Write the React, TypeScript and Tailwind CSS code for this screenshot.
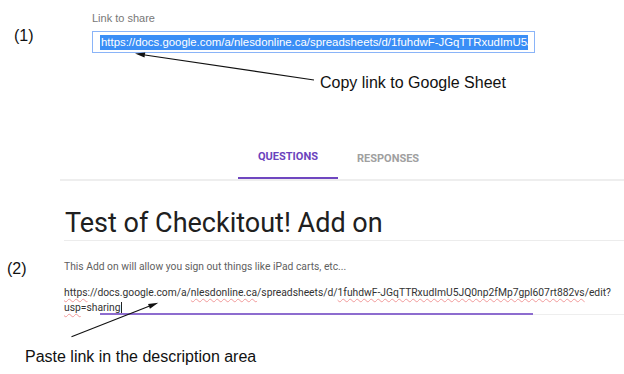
const sans = "font-['Liberation_Sans',Arial,sans-serif]";
const roboto = "font-['Roboto',sans-serif]";

const url1a = "https";
const url1b = "://docs.google.com/a/";
const url1c = "nlesdonline.ca";
const url1d = "/spreadsheets/d/";
const url1e = "1fuhdwF-JGqTTRxudImU5JQ0np2fMp7gpl607rt882vs";
const url1f = "/edit?";

const Arrow = ({ x1, y1, x2, y2 }: { x1: number; y1: number; x2: number; y2: number }) => {
  const a = Math.atan2(y2 - y1, x2 - x1);
  const len = 10;
  const w = 2.6;
  const bx = x2 - len * Math.cos(a);
  const by = y2 - len * Math.sin(a);
  const p1 = `${bx + w * Math.sin(a)},${by - w * Math.cos(a)}`;
  const p2 = `${bx - w * Math.sin(a)},${by + w * Math.cos(a)}`;
  return (
    <g>
      <line x1={x1} y1={y1} x2={bx} y2={by} stroke="#111" strokeWidth="1.1" />
      <polygon points={`${x2},${y2} ${p1} ${p2}`} fill="#111" />
    </g>
  );
};

const Squiggle = ({ children }: { children: React.ReactNode }) => (
  <span className="underline decoration-wavy decoration-[#f19a9a] decoration-1 underline-offset-[2px]">
    {children}
  </span>
);

export default function App() {
  return (
    <div className="relative w-[624px] h-[374px] overflow-hidden bg-white">
      {/* (1) share dialog */}
      <div className="flex pt-[12px]">
        <div className={`w-[92px] shrink-0 pl-[14px] pt-[14.5px] text-[16px] leading-[18px] text-[#111] ${sans}`}>(1)</div>
        <div className="w-[443px] shrink-0">
          <p className={`text-[11px] leading-[13px] text-[#777] ${sans}`}>Link to share</p>
          <div className="mt-[6px] h-[22px] border border-[#8ab4f8] flex items-center pl-[7px] pr-[6px]">
            <div className="h-[15px] flex-1 overflow-hidden bg-[#3a8ef6]">
              <span
                className={`block whitespace-nowrap pl-[1px] text-[11.4px] leading-[15px] text-white ${sans}`}
              >
                https://docs.google.com/a/nlesdonline.ca/spreadsheets/d/1fuhdwF-JGqTTRxudImU5JQ0np2fMp7gpl607rt882vs/edit?usp=sharing
              </span>
            </div>
          </div>
        </div>
      </div>
      <p className={`ml-[320px] mt-[21px] text-[16px] leading-[18px] text-[#111] ${sans}`}>Copy link to Google Sheet</p>

      {/* tabs */}
      <div className={`ml-[60px] mt-[52.5px] border-b-2 border-[#eeeeee] flex ${roboto}`}>
        <div className="ml-[178px] px-[20px] pb-[10.5px] border-b-2 border-[#6f47c0] -mb-[2px] relative top-[-2px]">
          <span className="text-[11px] leading-[13px] font-bold text-[#6a43bd]">QUESTIONS</span>
        </div>
        <div className="px-[19px] pb-[10.5px]">
          <span className="text-[11px] leading-[13px] font-bold text-[#a0a0a0]">RESPONSES</span>
        </div>
      </div>

      {/* (2) form header */}
      <div className="flex mt-[26px]">
        <div className={`w-[64px] shrink-0 pl-[7px] pt-[52.6px] text-[16px] leading-[18px] text-[#111] ${sans}`}>(2)</div>
        <div className={`flex-1 min-w-0 ${roboto}`}>
          <h1 className="ml-[1px] text-[27px] leading-[32px] text-[#202020]">Test of Checkitout! Add on</h1>
          <div className="mt-[1px] h-px bg-[#ececec]" />
          <p className="mt-[20px] text-[10.3px] leading-[12px] text-[#5f5f5f]">
            This Add on will allow you sign out things like iPad carts, etc...
          </p>
          <div className="mt-[12px] text-[10.3px] leading-[15px] text-[#333] whitespace-nowrap">
            <div>
              <Squiggle>{url1a}</Squiggle>
              {url1b}
              <Squiggle>{url1c}</Squiggle>
              {url1d}
              <Squiggle>{url1e}</Squiggle>
              {url1f}
            </div>
            <div className="flex items-center">
              <Squiggle>usp</Squiggle>=sharing
              <span className="inline-block w-px h-[11px] bg-[#222] ml-[1px]" />
            </div>
          </div>
          <div className="-mt-[2.5px] flex items-end h-[2px]">
            <div className="w-[36px] shrink-0" />
            <div className="w-[433px] shrink-0 h-[2px] bg-[#8d6ccf]" />
            <div className="flex-1 h-px bg-[#eeeeee]" />
          </div>
        </div>
      </div>

      <p className={`ml-[25px] mt-[33.5px] text-[16px] leading-[18px] text-[#111] ${sans}`}>
        Paste link in the description area
      </p>

      <svg className="absolute inset-0 pointer-events-none" width="624" height="374">
        <Arrow x1={314} y1={80} x2={135} y2={53.5} />
        <Arrow x1={71.5} y1={336.7} x2={158.3} y2={302.7} />
      </svg>
    </div>
  );
}
